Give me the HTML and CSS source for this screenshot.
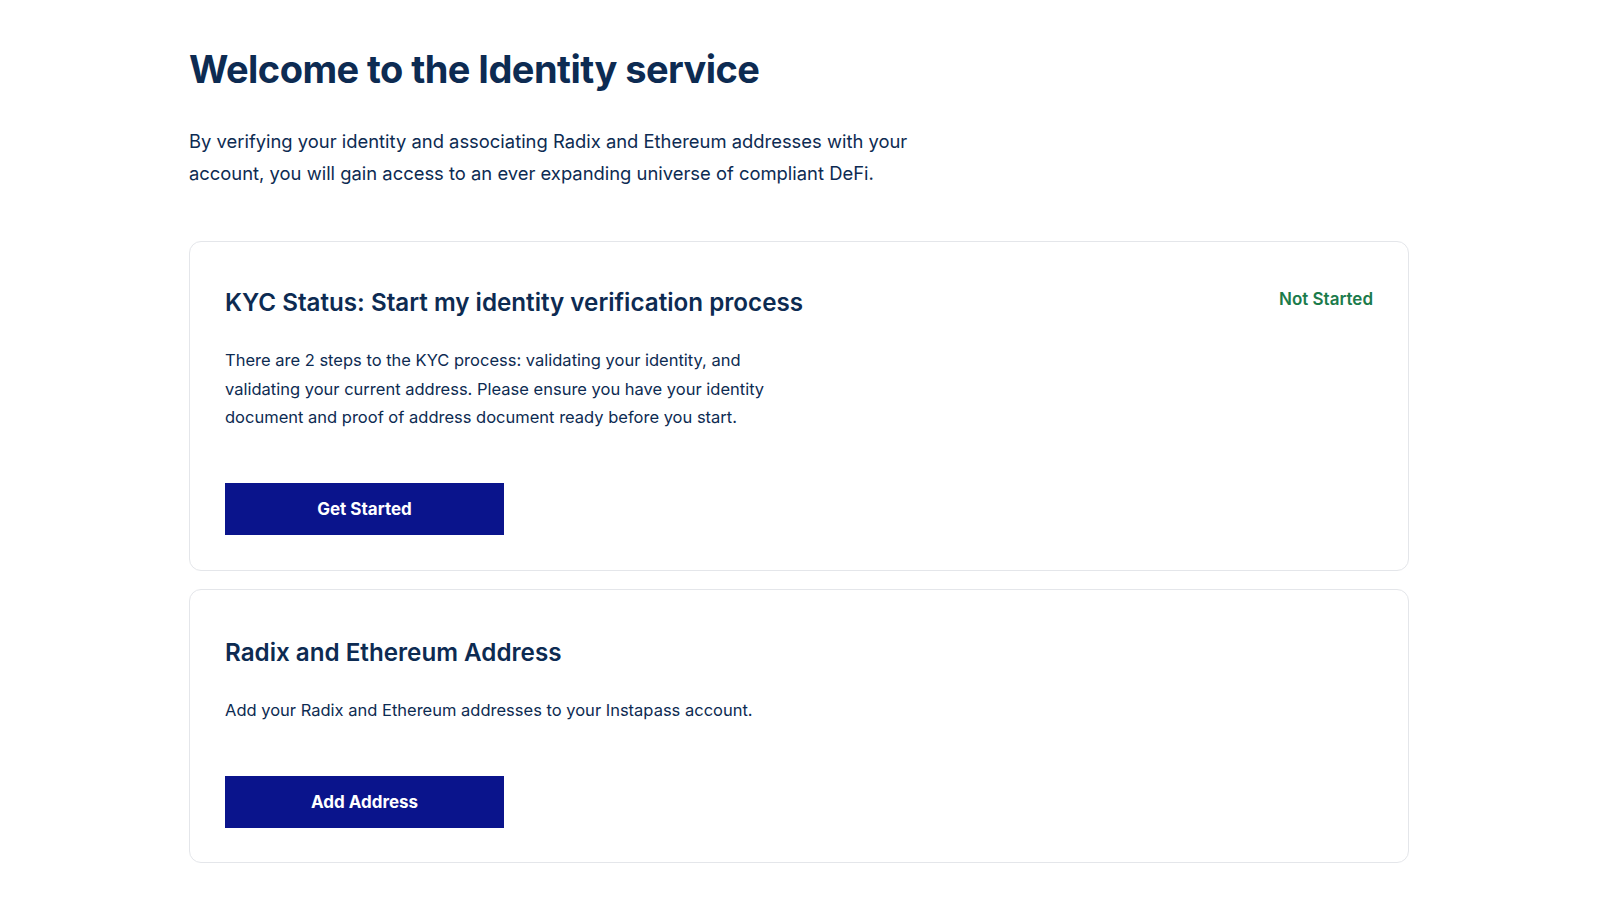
FILE: index.html
```html
<!DOCTYPE html>
<html lang="en">
<head>
<meta charset="utf-8">
<title>Identity service</title>
<link rel="stylesheet" href="styles.css">
</head>
<body>
<main class="page">
  <h1 class="title">Welcome to the Identity service</h1>
  <p class="intro">By verifying your identity and associating Radix and Ethereum addresses with your account, you will gain access to an ever expanding universe of compliant DeFi.</p>

  <section class="card card-kyc">
    <div class="card-head">
      <h2 class="card-title">KYC Status: Start my identity verification process</h2>
      <span class="status">Not Started</span>
    </div>
    <p class="card-text narrow">There are 2 steps to the KYC process: validating your identity, and validating your current address. Please ensure you have your identity document and proof of address document ready before you start.</p>
    <button class="btn" type="button">Get Started</button>
  </section>

  <section class="card card-addr">
    <div class="card-head">
      <h2 class="card-title">Radix and Ethereum Address</h2>
    </div>
    <p class="card-text">Add your Radix and Ethereum addresses to your Instapass account.</p>
    <button class="btn" type="button">Add Address</button>
  </section>
</main>
</body>
</html>
```

FILE: styles.css
```css
* { box-sizing: border-box; }

html, body {
  margin: 0;
  padding: 0;
  background: #ffffff;
}

body {
  font-family: Inter, "Noto Sans", sans-serif;
  color: #0d2b52;
}

.page {
  width: 1220px;
  margin: 0 0 0 189px;
  padding-top: 45px;
  display: flex;
  flex-direction: column;
}

.title {
  margin: 0;
  font-size: 38px;
  line-height: 48px;
  font-weight: 700;
  letter-spacing: -0.55px;
  color: #0d2b52;
}

.intro {
  margin: 32px 0 0 0;
  width: 740px;
  font-size: 18.4px;
  line-height: 32px;
  font-weight: 400;
  color: #0d2b52;
}

.card {
  border: 1px solid #e4e6ea;
  border-radius: 12px;
  padding: 0 35px;
  display: flex;
  flex-direction: column;
  align-items: flex-start;
}

.card-kyc {
  margin-top: 52px;
  height: 330px;
  padding-top: 45px;
}

.card-addr {
  margin-top: 18px;
  height: 274px;
  padding-top: 47px;
}

.card-head {
  width: 100%;
  display: flex;
  justify-content: space-between;
  align-items: flex-start;
}

.card-title {
  margin: 0;
  font-size: 24.2px;
  line-height: 32px;
  font-weight: 600;
  color: #0d2b52;
}

.status {
  font-size: 17px;
  line-height: 24px;
  font-weight: 600;
  color: #1b7b4b;
}

.card-text {
  margin: 27px 0 0 0;
  font-size: 16.5px;
  line-height: 28.5px;
  color: #0d2b52;
}

.card-text.narrow {
  width: 560px;
}

.card-kyc .btn { margin-top: 51px; }
.card-addr .btn { margin-top: 51px; }

.btn {
  width: 279px;
  height: 52px;
  border: 0;
  border-radius: 0;
  background: #0a148c;
  color: #ffffff;
  font-family: Inter, "Noto Sans", sans-serif;
  font-size: 17px;
  font-weight: 700;
  cursor: pointer;
}
```
